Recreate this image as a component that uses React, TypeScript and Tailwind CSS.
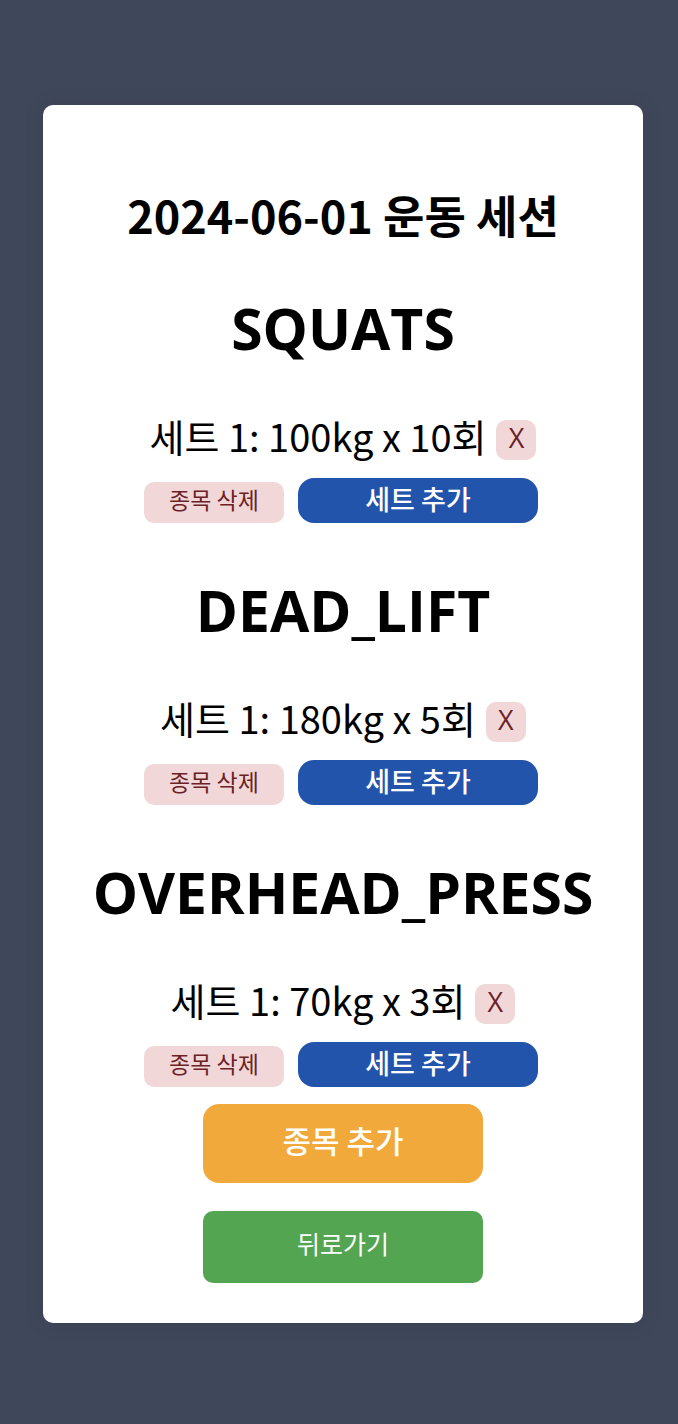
type Exercise = { name: string; sets: string[] };

const exercises: Exercise[] = [
  { name: "SQUATS", sets: ["세트 1: 100kg x 10회"] },
  { name: "DEAD_LIFT", sets: ["세트 1: 180kg x 5회"] },
  { name: "OVERHEAD_PRESS", sets: ["세트 1: 70kg x 3회"] },
];

function ExerciseSection({ name, sets }: Exercise) {
  return (
    <section className="flex w-full flex-col items-center">
      <h2 className="font-['Open_Sans','Noto_Sans_CJK_KR',sans-serif] text-[57px] leading-[70px] font-bold">
        {name}
      </h2>
      <ul className="mt-[57px] flex flex-col gap-4">
        {sets.map((set) => (
          <li key={set} className="flex h-10 items-center justify-center gap-[10px]">
            <span className="pb-2 text-[38px] leading-10 whitespace-nowrap">{set}</span>
            <button
              type="button"
              aria-label={`${set} 삭제`}
              className="h-10 w-10 rounded-[10px] bg-[#f2d7d9] pb-1 font-['Open_Sans',sans-serif] text-[27px] leading-8 text-[#6b2226]"
            >
              X
            </button>
          </li>
        ))}
      </ul>
      <div className="mt-[18px] flex items-end gap-[14px] pr-1">
        <button
          type="button"
          className="h-[41px] w-[140px] rounded-[10px] bg-[#f2d7d9] pb-2 text-[23px] leading-8 text-[#6b2226]"
        >
          종목 삭제
        </button>
        <button
          type="button"
          className="h-[45px] w-[240px] rounded-2xl bg-[#2354ac] pb-1 text-[27px] leading-8 font-medium text-white"
        >
          세트 추가
        </button>
      </div>
    </section>
  );
}

export default function App() {
  return (
    <div className="min-h-screen bg-[#3f475a] pt-[105px] pr-[35px] pb-[101px] pl-[43px] font-['Noto_Sans_CJK_KR',sans-serif] text-black">
      <main className="mx-auto flex max-w-[600px] flex-col items-center rounded-[10px] bg-white pt-[78px] pb-10 shadow-[0_0_20px_rgba(0,0,0,0.1)]">
        <h1 className="text-[45px] leading-[64px] font-bold">2024-06-01 운동 세션</h1>
        <div className="mt-[46px] flex w-full flex-col gap-[52px]">
          {exercises.map((exercise) => (
            <ExerciseSection key={exercise.name} {...exercise} />
          ))}
        </div>
        <button
          type="button"
          className="mt-[17px] h-[79px] w-[280px] rounded-2xl bg-[#f1a93b] pb-2 text-[31px] leading-10 font-medium text-white"
        >
          종목 추가
        </button>
        <button
          type="button"
          className="mt-7 h-[72px] w-[280px] rounded-[10px] bg-[#54a552] pb-2 text-[25px] leading-8 text-white"
        >
          뒤로가기
        </button>
      </main>
    </div>
  );
}
